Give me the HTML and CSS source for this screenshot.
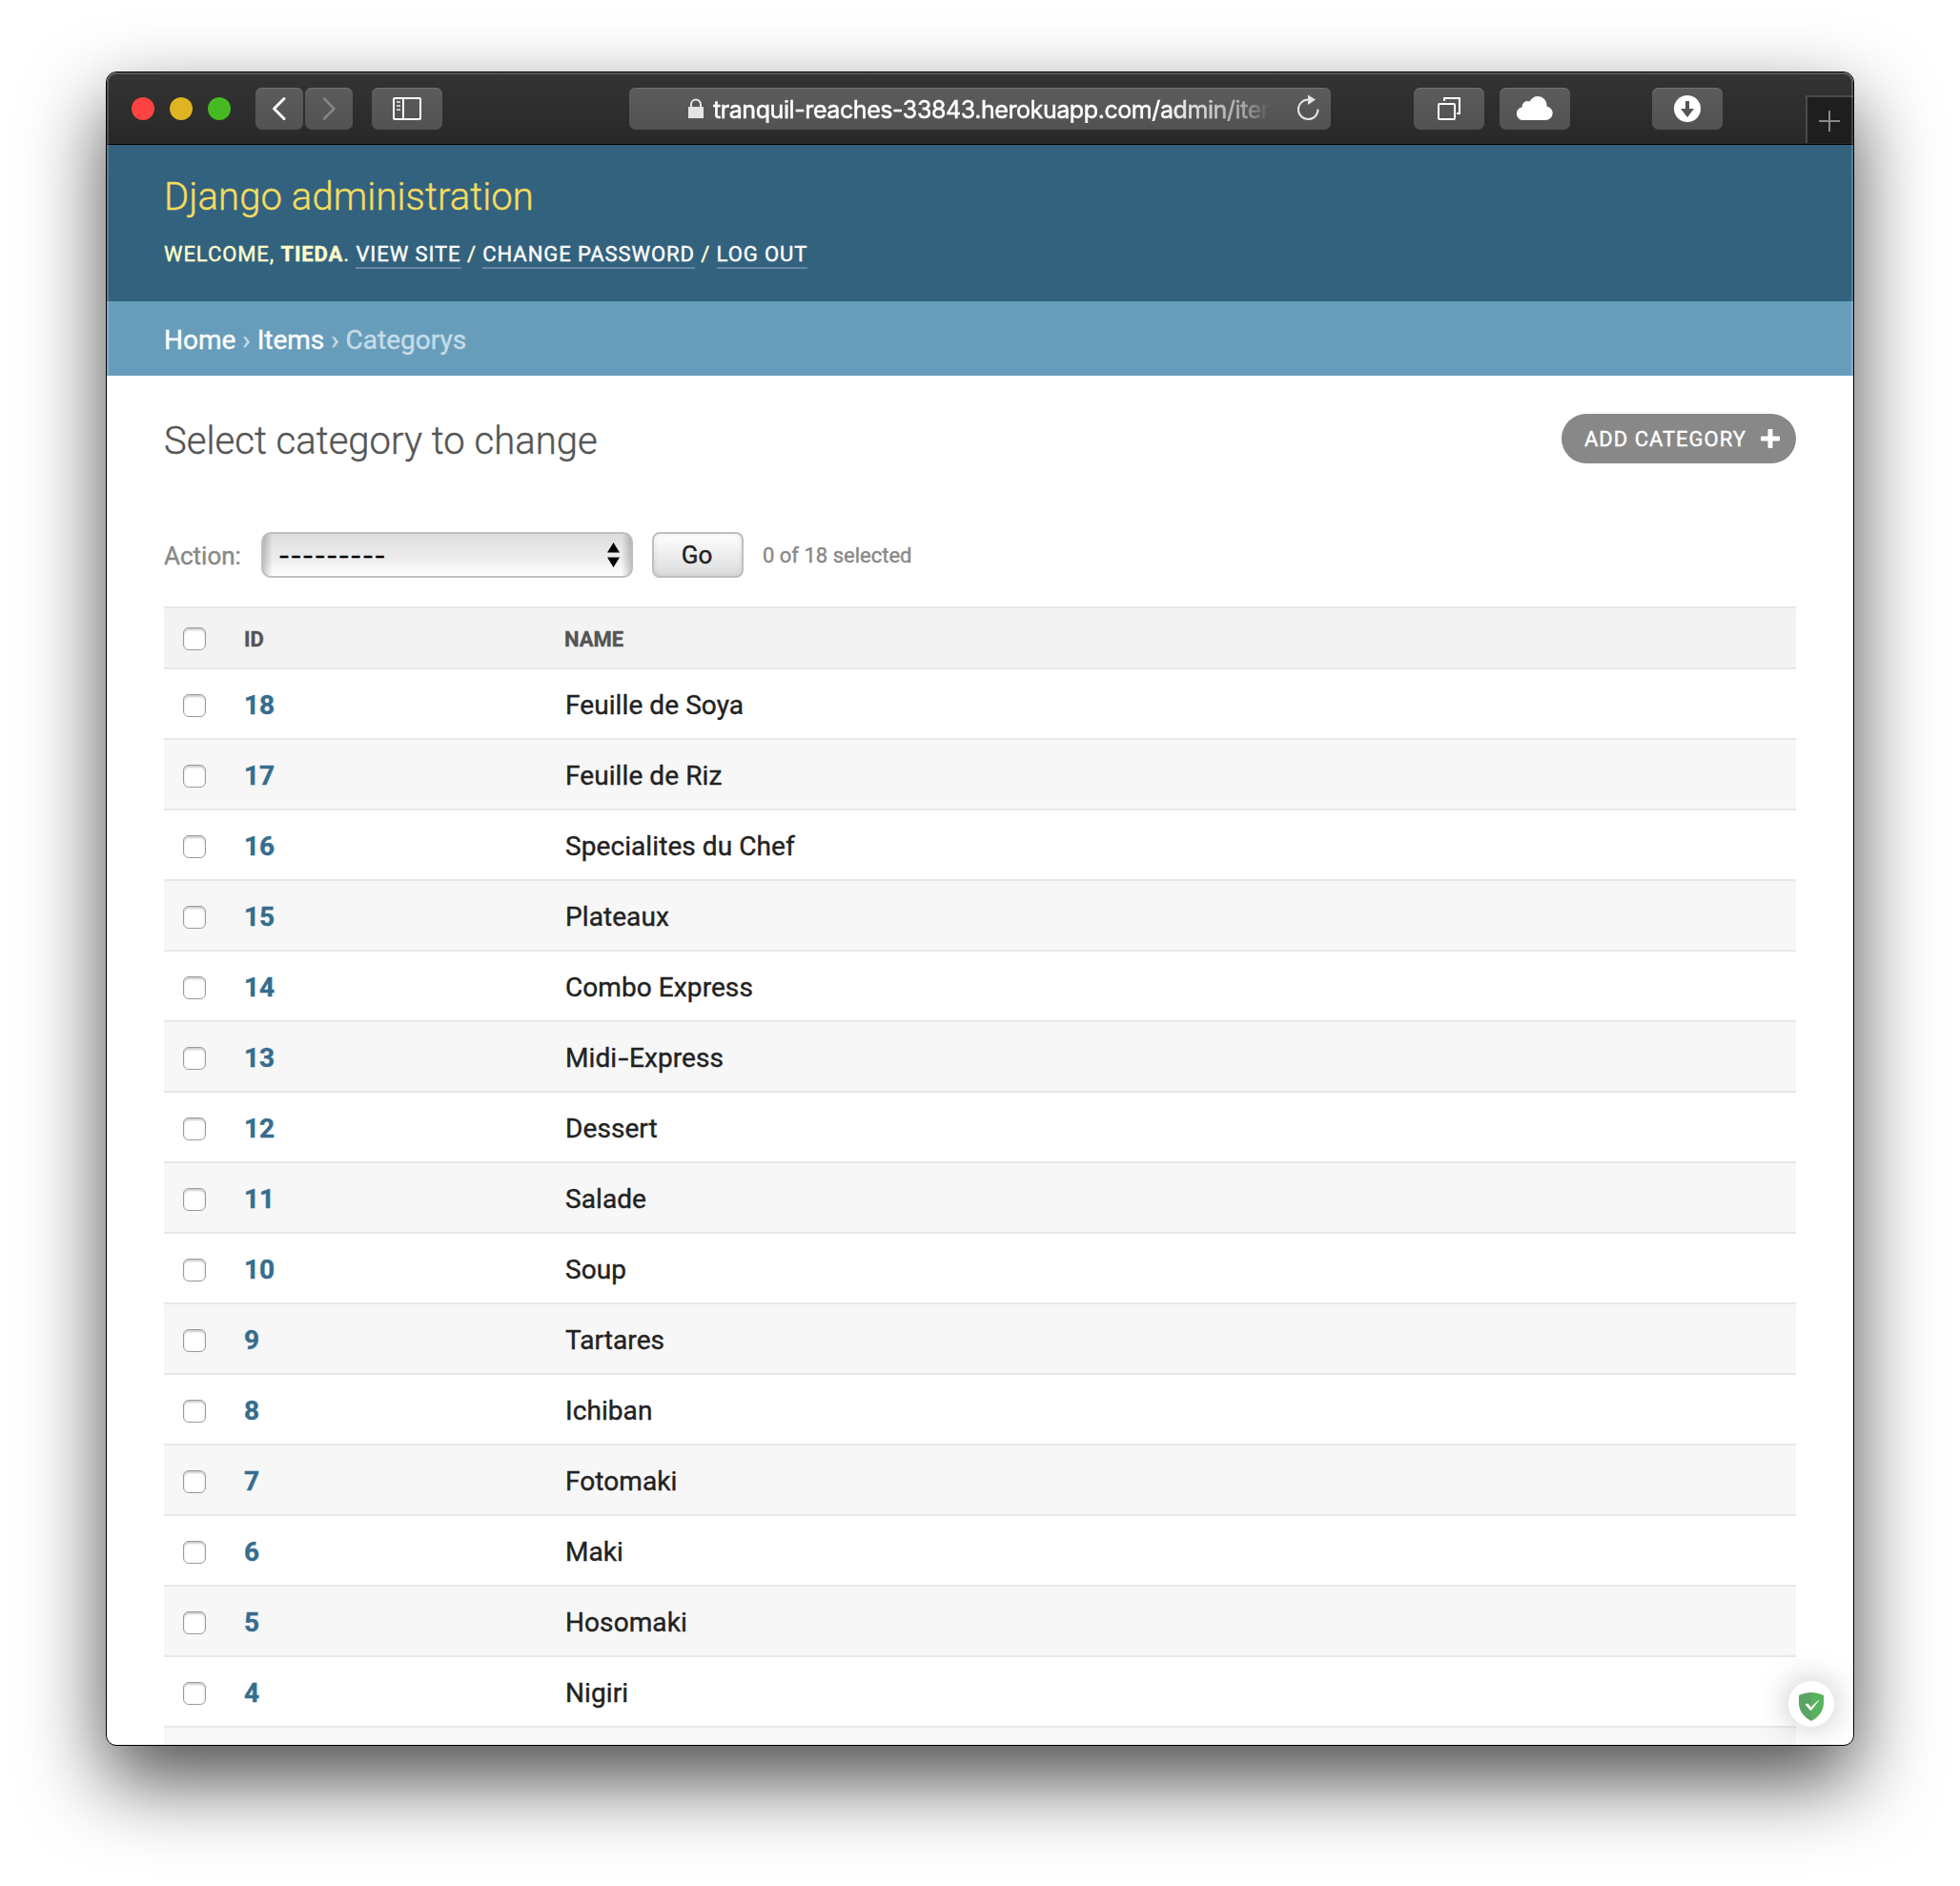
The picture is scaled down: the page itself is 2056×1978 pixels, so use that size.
FILE: index.html
```html
<!DOCTYPE html>
<html lang="en">
<head>
<meta charset="utf-8">
<title>Select category to change | Django site admin</title>
<link rel="stylesheet" href="styles.css">
</head>
<body>
<div class="window">
  <div class="toolbar">
    <span class="light red"></span><span class="light yellow"></span><span class="light green"></span>
    <button class="tool back" aria-label="Back"><svg width="50" height="44" fill="none" stroke="#fff" stroke-width="3" stroke-linecap="round" stroke-linejoin="round"><path d="M30 11.500 19.500 22 30 32.500"/></svg></button>
    <button class="tool forward" aria-label="Forward"><svg width="50" height="44" fill="none" stroke="#858585" stroke-width="2.500" stroke-linecap="round" stroke-linejoin="round"><path d="M20 11.500 30.500 22 20 32.500"/></svg></button>
    <button class="tool sidebar" aria-label="Sidebar"><svg width="74" height="44" fill="none" stroke="#fff" stroke-width="2"><rect x="23" y="11" width="28" height="22" rx="1"/><path d="M33 11v22"/><path d="M26 15h4M26 19h4M26 23h4" stroke="#c4c4c4"/></svg></button>
    <div class="address">
      <svg class="lock" width="16" height="22" viewBox="0 0 16 22"><path d="M3 10V6.500a5 5 0 0 1 10 0V10" fill="none" stroke="#e4e4e4" stroke-width="2"/><rect y="9" width="16" height="12" rx=".5" fill="#e4e4e4"/></svg>
      <span class="url">tranquil-reaches-33843.herokuapp.com/admin/item</span>
      <svg class="reload" width="26" height="28" viewBox="0 0 26 28"><path d="M12.500 5.500a10.300 10.300 0 1 0 10 10" fill="none" stroke="#e4e4e4" stroke-width="2"/><path d="M12 .5v10.500l8-5.500z" fill="#e4e4e4"/></svg>
    </div>
    <button class="tool tabs" aria-label="Tabs"><svg width="74" height="44" fill="none" stroke="#fff" stroke-width="2"><rect x="26" y="17" width="17" height="16" rx="1"/><path d="M32 14v-3h16v16h-3"/></svg></button>
    <button class="tool cloud" aria-label="iCloud tabs"><svg width="74" height="44" fill="#fff"><path d="M25 34a6.800 6.800 0 0 1-1.500-13.500c0-5 4.500-7.500 8-6C33.500 11 36.500 9 40 9c5.500 0 10 4.500 9.500 10.500A7.300 7.300 0 0 1 48 34z"/></svg></button>
    <button class="tool downloads" aria-label="Downloads"><svg width="74" height="44"><circle cx="37" cy="22" r="14" fill="#fff"/><path d="M35 14h4v8h5l-7 9-7-9h5z" fill="#555"/></svg></button>
    <button class="newtab" aria-label="New tab"><svg width="48" height="48" fill="none" stroke="#888" stroke-width="2"><path d="M12 25h22M23 14v22"/></svg></button>
  </div>
  <header class="header">
    <div class="brand">Django administration</div>
    <div class="user-tools">Welcome, <strong>tieda</strong>. <a>View site</a> / <a>Change password</a> / <a>Log out</a></div>
  </header>
  <nav class="breadcrumbs"><a>Home</a> › <a>Items</a> › Categorys</nav>
  <main class="content">
    <div class="title-row">
      <h1>Select category to change</h1>
      <a class="add">Add category<svg width="20" height="20" viewBox="0 0 20 20"><path d="M8.500 0h3a1 1 0 0 1 1 1v6.500H19a1 1 0 0 1 1 1v3a1 1 0 0 1-1 1h-6.500V19a1 1 0 0 1-1 1h-3a1 1 0 0 1-1-1v-6.500H1a1 1 0 0 1-1-1v-3a1 1 0 0 1 1-1h6.500V1a1 1 0 0 1 1-1z" fill="#fff"/></svg></a>
    </div>
    <div class="actions">
      <label>Action:</label>
      <div class="select"><span>---------</span><svg width="13" height="26" viewBox="0 0 13 26"><path d="M0 10.500 6.500 0 13 10.500zM0 15.500h13L6.500 26z"/></svg></div>
      <button class="go">Go</button>
      <span class="counter">0 of 18 selected</span>
    </div>
    <div class="results">
      <div class="row head"><input type="checkbox"><b>ID</b><b>Name</b></div>
      <div class="row"><input type="checkbox"><a>18</a><span>Feuille de Soya</span></div>
      <div class="row"><input type="checkbox"><a>17</a><span>Feuille de Riz</span></div>
      <div class="row"><input type="checkbox"><a>16</a><span>Specialites du Chef</span></div>
      <div class="row"><input type="checkbox"><a>15</a><span>Plateaux</span></div>
      <div class="row"><input type="checkbox"><a>14</a><span>Combo Express</span></div>
      <div class="row"><input type="checkbox"><a>13</a><span>Midi<i class="hyphen">-</i>Express</span></div>
      <div class="row"><input type="checkbox"><a>12</a><span>Dessert</span></div>
      <div class="row"><input type="checkbox"><a>11</a><span>Salade</span></div>
      <div class="row"><input type="checkbox"><a>10</a><span>Soup</span></div>
      <div class="row"><input type="checkbox"><a>9</a><span>Tartares</span></div>
      <div class="row"><input type="checkbox"><a>8</a><span>Ichiban</span></div>
      <div class="row"><input type="checkbox"><a>7</a><span>Fotomaki</span></div>
      <div class="row"><input type="checkbox"><a>6</a><span>Maki</span></div>
      <div class="row"><input type="checkbox"><a>5</a><span>Hosomaki</span></div>
      <div class="row"><input type="checkbox"><a>4</a><span>Nigiri</span></div>
      <div class="row"></div>
    </div>
  </main>
  <div class="shield"><svg width="26" height="30" viewBox="0 0 26 30"><path d="M13 0C9 0 4 1 0 3v8c0 8 5 15 13 19z" fill="#5aa565"/><path d="M13 0c4 0 9 1 13 3v8c0 8-5 15-13 19z" fill="#59b25c"/><path d="M7 12.500 12.500 19 20.500 8.500 12.500 16 9.500 12z" fill="#fff" stroke="#fff" stroke-width=".8"/></svg></div>
</div>
</body>
</html>
```
FILE: styles.css
```css
* { box-sizing: border-box; }
html, body { margin: 0; height: 1978px; overflow: hidden; background: #fff; }
body {
  padding: 75px 111px;
  font-family: Roboto, "Liberation Sans", sans-serif;
  color: #222;
  -webkit-text-stroke: .4px;
}
svg { display: block; flex: none; }
button { padding: 0; border: 0; font-family: inherit; }

.window {
  position: relative;
  width: 1834px;
  height: 1756px;
  border: 1px solid #000;
  border-radius: 11px;
  overflow: hidden;
  background: #fff;
  box-shadow: 0 36px 84px rgba(0, 0, 0, .7);
}
/* light edge along the top and sides of the window */
.window::after {
  content: "";
  position: absolute;
  inset: 0;
  border: 2px solid rgba(255, 255, 255, .18);
  border-bottom: 0;
  border-radius: 10px 10px 0 0;
  pointer-events: none;
}

.toolbar {
  display: flex;
  align-items: flex-start;
  height: 76px;
  padding: 16px 0 0 26px;
  border-bottom: 1px solid #000;
  background: linear-gradient(#343434, #282828);
}
.light { width: 24px; height: 24px; margin: 10px 16px 0 0; border-radius: 50%; }
.red { background: #ff4242; }
.yellow { background: #dfb322; }
.green { background: #45ba22; margin-right: 26px; }
.tool, .address {
  height: 44px;
  border-radius: 7px;
  background: linear-gradient(#5c5c5c, #525252);
  box-shadow: inset 0 1px #717171;
}
.back { margin-right: 2px; }
.forward { margin-right: 20px; }
.sidebar { margin-right: 196px; }
.address { display: flex; width: 736px; padding-left: 62px; margin-right: 87px; }
.lock { margin: 11px 10px 0 0; }
.url {
  width: 584px;
  white-space: nowrap;
  font: 400 25px/46px Inter, "Liberation Sans", sans-serif;
  letter-spacing: -.42px;
  color: #fff;
  -webkit-text-stroke: .5px;
  -webkit-mask-image: linear-gradient(90deg, #000 80%, rgba(0, 0, 0, .5) 95%, transparent);
  mask-image: linear-gradient(90deg, #000 80%, rgba(0, 0, 0, .5) 95%, transparent);
}
.reload { margin: 7px 0 0 28px; }
.tabs { margin-right: 16px; }
.cloud { margin-right: 86px; }
.downloads { margin-right: 87px; }
.newtab {
  width: 50px;
  height: 50px;
  margin-top: 8px;
  border: solid #4b4b4b;
  border-width: 2px 0 0 2px;
  background: #1e1e1e;
}

.header { height: 164px; padding: 31px 60px 0; background: #33627f; color: #ffc; }
.brand { font-size: 40px; font-weight: 300; line-height: 48px; letter-spacing: .1px; color: #f5dd5d; }
.user-tools {
  margin-top: 23px;
  font-size: 22px;
  line-height: 26px;
  letter-spacing: .92px;
  text-transform: uppercase;
}
.user-tools a { display: inline-block; color: #fff; border-bottom: 2px solid #6488a0; }
.breadcrumbs { height: 78px; padding: 0 60px; background: #679dbb; font-size: 28px; line-height: 82px; color: #c4dce8; }
.breadcrumbs a { color: #fff; }

.content { padding: 40px 60px 0; }
.title-row { display: flex; justify-content: space-between; height: 124px; }
h1 { margin: 5px 0 0; font-size: 40px; font-weight: 300; line-height: 48px; letter-spacing: .04px; color: #555; }
.add {
  display: flex;
  align-items: center;
  justify-content: space-between;
  width: 246px;
  height: 52px;
  padding: 0 17px 0 24px;
  border-radius: 26px;
  background: #888;
  color: #fff;
  font-size: 22px;
  letter-spacing: 1px;
  text-transform: uppercase;
}
.actions { display: flex; align-items: center; height: 48px; margin-bottom: 30px; color: #888; }
.actions label { width: 102px; padding-top: 2px; font-size: 26px; }
.select {
  display: flex;
  align-items: center;
  justify-content: space-between;
  width: 390px;
  height: 48px;
  padding: 0 12px 0 16px;
  border: 2px solid #bfbfbf;
  border-radius: 10px;
  background:
    linear-gradient(90deg, rgba(0, 0, 0, .2), transparent 10px, transparent calc(100% - 10px), rgba(0, 0, 0, .2)),
    linear-gradient(#dedede, #ededed 60%, #fff);
  color: #000;
  font: 26px Inter, sans-serif;
  letter-spacing: .6px;
}
.go {
  width: 96px;
  height: 48px;
  margin: 0 20px;
  padding-right: 2px;
  border: 2px solid #bfbfbf;
  border-radius: 8px;
  background: linear-gradient(#fff, #dcdcdc);
  box-shadow: inset 0 0 6px rgba(0, 0, 0, .08);
  font-size: 26px;
  color: #222;
}
.counter { padding-top: 1px; font-size: 22px; }

.row {
  display: grid;
  grid-template-columns: 84px 336px 1fr;
  align-items: center;
  height: 74px;
  border-bottom: 2px solid #e8e8e8;
  font-size: 28px;
  line-height: 36px;
}
.row:nth-child(odd) { background: #f7f7f7; }
.row.head { height: 66px; border-top: 2px solid #e8e8e8; background: #f3f3f3; font-size: 22px; color: #555; text-transform: uppercase; }
.row a, .row b, .row span { padding-top: 4px; }
.row a { font-weight: 700; color: #366d8e; }
.row span { padding-left: 1px; letter-spacing: .08px; }
.hyphen { display: inline-block; margin: 0 2.500px; transform: scaleX(1.4); font-style: normal; }
.row input {
  appearance: none;
  width: 24px;
  height: 24px;
  margin: 4px 0 0 20px;
  border: 1px solid #9a9a9a;
  border-radius: 6px;
  background: #fff;
  box-shadow: inset 0 2px 2px rgba(0, 0, 0, .2);
}
.row.head input { margin-top: 2px; }

.shield {
  position: absolute;
  right: 20px;
  bottom: 19px;
  display: flex;
  align-items: center;
  justify-content: center;
  width: 48px;
  height: 48px;
  padding-top: 5px;
  border-radius: 50%;
  background: #fff;
  box-shadow: 0 0 34px rgba(0, 0, 0, .25);
}
```
